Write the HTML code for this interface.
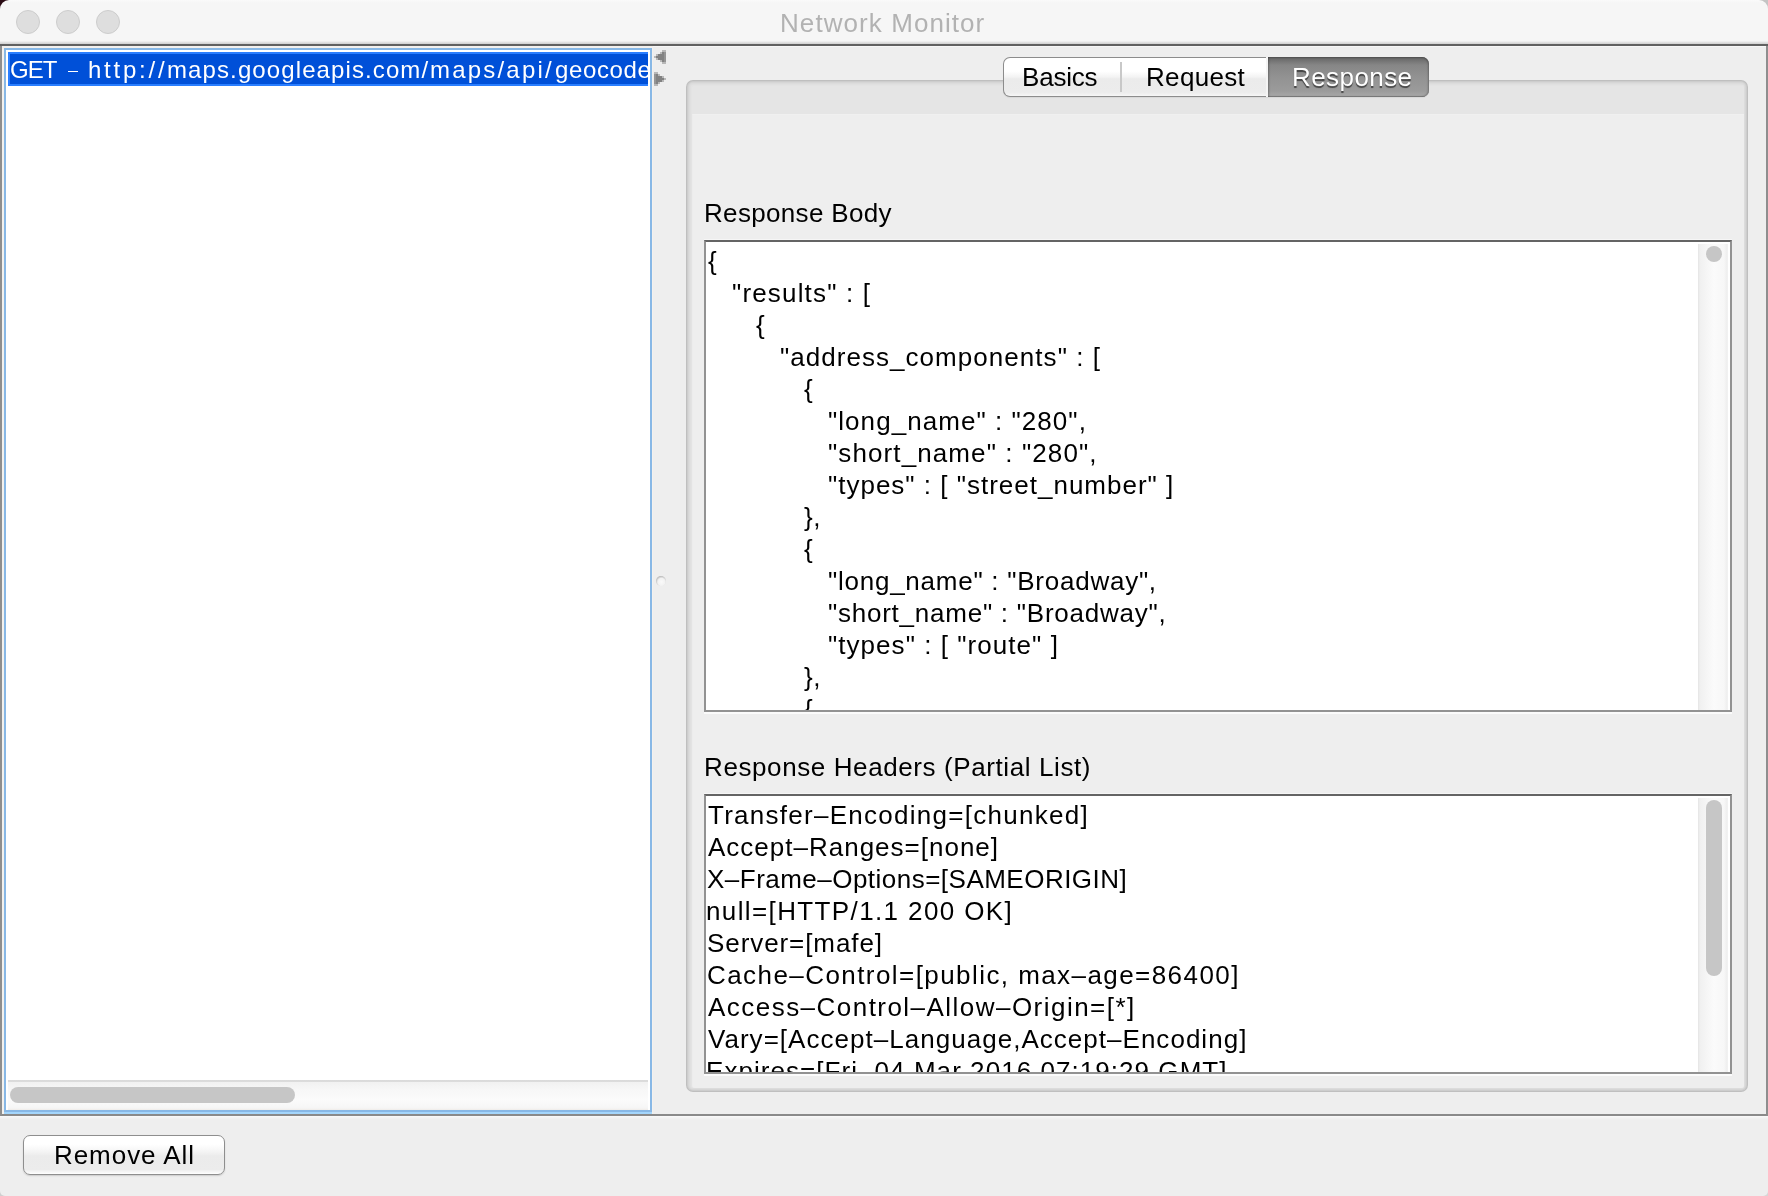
<!DOCTYPE html>
<html><head><meta charset="utf-8"><title>Network Monitor</title><style>
*{margin:0;padding:0;box-sizing:border-box}
html,body{width:1768px;height:1196px;overflow:hidden;background:#eeeeee}
body{position:relative;font-family:"Liberation Sans",sans-serif;-webkit-font-smoothing:antialiased}
.a{position:absolute}
.t{position:absolute;white-space:pre;line-height:32px;will-change:transform;font-family:"Liberation Sans",sans-serif}
</style></head><body>
<div class="a" style="left:0;top:0;width:1768px;height:1196px;background:#eeeeee;border-radius:9px 9px 0 0"></div>
<div class="a" style="left:0;top:0;width:12px;height:12px;background:#2a0c14"></div>
<div class="a" style="left:1756px;top:0;width:12px;height:12px;background:#c4c4c4"></div>
<div class="a" style="left:0;top:1188px;width:8px;height:8px;background:#cfcfcf"></div>
<div class="a" style="left:1760px;top:1188px;width:8px;height:8px;background:#d6d6d6"></div>
<div class="a" style="left:0;top:1100px;width:1768px;height:96px;background:linear-gradient(#eeeeee,#eeeeee 16px,#fafafa 16px,#f2f2f2 18px,#eeeeee 20px);border-radius:0 0 5px 5px"></div>
<div class="a" style="left:0;top:0;width:1768px;height:44px;background:linear-gradient(#fafafa,#f6f6f6 3px,#f6f6f6 41px,#e6e6e6 42px,#cfcfcf 44px);border-radius:9px 9px 0 0"></div>
<div class="a" style="left:0;top:44px;width:1768px;height:2px;background:#616161"></div>
<div class="a" style="left:16px;top:10px;width:24px;height:24px;border-radius:50%;background:#dedede;border:1px solid #cdcdcd"></div>
<div class="a" style="left:56px;top:10px;width:24px;height:24px;border-radius:50%;background:#dedede;border:1px solid #cdcdcd"></div>
<div class="a" style="left:96px;top:10px;width:24px;height:24px;border-radius:50%;background:#dedede;border:1px solid #cdcdcd"></div>
<div class="t" style="left:780px;top:7px;font-size:26px;letter-spacing:1.071px;color:#b2b2b2;">Network Monitor</div>
<div class="a" style="left:0;top:46px;width:1768px;height:1070px;background:#eeeeee;border-left:2px solid #8e8e8e;border-right:2px solid #8e8e8e;border-bottom:2px solid #8a8a8a"></div>
<div class="a" style="left:2px;top:46px;width:1764px;height:1px;background:#f7f7f7"></div>
<div class="a" style="left:2px;top:46px;width:651px;height:1068px;background:#f3f1ee"></div>
<div class="a" style="left:4px;top:48px;width:648px;height:1066px;background:#88b8e6"></div>
<div class="a" style="left:4px;top:1112px;width:648px;height:2px;background:#a4d6fc"></div>
<div class="a" style="left:6px;top:50px;width:644px;height:1060px;background:#fff"></div>
<div class="a" style="left:8px;top:52px;width:640px;height:34px;background:#0050d8;border:2px solid #2a7eff;border-right:0"></div>
<div class="a" style="left:8px;top:52px;width:640px;height:34px;overflow:hidden"><div class="t" style="left:2px;top:2px;font-size:24px;letter-spacing:-1.0px;color:#fff;">GET</div><div class="t" style="left:80px;top:2px;font-size:24px;letter-spacing:2.767px;color:#fff;">http://</div><div class="t" style="left:159px;top:2px;font-size:24px;letter-spacing:1.105px;color:#fff;">maps.googleapis.com/</div><div class="t" style="left:422.4px;top:2px;font-size:24px;letter-spacing:2.2px;color:#fff;">maps/api/</div><div class="a" style="left:60px;top:18.5px;width:10px;height:1.7px;background:#fff"></div><div class="t" style="left:546.5px;top:2px;font-size:24px;letter-spacing:0.62px;color:#fff;">geocode/json?address=280+Broadway</div></div>
<div class="a" style="left:8px;top:1080px;width:640px;height:30px;background:linear-gradient(#dadada,#dcdcdc 2px,#f1f1f1 2px,#f7f7f7 10px,#fbfbfb 20px,#f6f6f6 28px,#efece9 30px)"></div>
<div class="a" style="left:10px;top:1087px;width:285px;height:16px;border-radius:8px;background:#c6c6c6"></div>
<svg class="a" style="left:652px;top:48px" width="20" height="42" viewBox="0 0 20 42" shape-rendering="crispEdges"><rect x="10" y="2" width="4" height="2" fill="#b8b8b8"/><rect x="10" y="14" width="4" height="2" fill="#b8b8b8"/><rect x="8" y="4" width="2" height="2" fill="#b8b8b8"/><rect x="10" y="4" width="4" height="2" fill="#828282"/><rect x="8" y="12" width="2" height="2" fill="#b8b8b8"/><rect x="10" y="12" width="4" height="2" fill="#828282"/><rect x="4" y="6" width="2" height="2" fill="#b8b8b8"/><rect x="6" y="6" width="8" height="2" fill="#828282"/><rect x="4" y="10" width="2" height="2" fill="#b8b8b8"/><rect x="6" y="10" width="8" height="2" fill="#828282"/><rect x="2" y="8" width="2" height="2" fill="#b8b8b8"/><rect x="4" y="8" width="10" height="2" fill="#828282"/><rect x="12" y="4" width="2" height="10" fill="#959595"/><rect x="2" y="24" width="4" height="2" fill="#b8b8b8"/><rect x="2" y="36" width="4" height="2" fill="#b8b8b8"/><rect x="2" y="26" width="4" height="2" fill="#828282"/><rect x="6" y="26" width="2" height="2" fill="#b8b8b8"/><rect x="2" y="34" width="4" height="2" fill="#828282"/><rect x="6" y="34" width="2" height="2" fill="#b8b8b8"/><rect x="2" y="28" width="8" height="2" fill="#828282"/><rect x="10" y="28" width="2" height="2" fill="#b8b8b8"/><rect x="2" y="32" width="8" height="2" fill="#828282"/><rect x="10" y="32" width="2" height="2" fill="#b8b8b8"/><rect x="2" y="30" width="10" height="2" fill="#828282"/><rect x="12" y="30" width="2" height="2" fill="#b8b8b8"/><rect x="2" y="26" width="2" height="10" fill="#959595"/></svg>
<div class="a" style="left:656px;top:576px;width:10px;height:10px;border-radius:50%;background:radial-gradient(circle at 55% 60%,#fafafa 0,#f2f2f2 45%,#a8a8a8 80%,#d8d8d8 100%)"></div>
<div class="a" style="left:686px;top:80px;width:1062px;height:1012px"><div class="a" style="left:0px;top:0px;right:0px;bottom:0px;border-radius:7px;background:#bfbfbf"></div><div class="a" style="left:1px;top:1px;right:1px;bottom:1px;border-radius:6px;background:#cdcdcd"></div><div class="a" style="left:2px;top:2px;right:2px;bottom:2px;border-radius:5px;background:#d6d6d6"></div><div class="a" style="left:3px;top:3px;right:3px;bottom:3px;border-radius:4px;background:#dcdcdc"></div><div class="a" style="left:4px;top:4px;right:4px;bottom:4px;border-radius:3px;background:#e0e0e0"></div><div class="a" style="left:5px;top:5px;right:4px;bottom:4px;border-radius:2px;background:#e3e3e3"></div><div class="a" style="left:6px;top:6px;right:4px;bottom:4px;border-radius:2px;background:#e5e5e5"></div><div class="a" style="left:6px;top:34px;right:4px;bottom:4px;border-radius:0 0 3px 3px;background:#eeeeee;border-top:1px solid #f0f0f0;border-left:1px solid #ececec"></div></div>
<div class="a" style="left:1003px;top:57px;width:426px;height:40px;border-radius:7px;background:#8c8c8c;box-shadow:0 1px 1px rgba(0,0,0,0.06)"></div>
<div class="a" style="left:1004px;top:58px;width:262px;height:38px;border-radius:6px 0 0 6px;background:linear-gradient(#ffffff,#ffffff 35%,#f3f3f3 50%,#ebebeb 55%,#ececec 90%,#f6f6f6 100%)"></div>
<div class="a" style="left:1120px;top:62px;width:2px;height:30px;background:#c8c8c8"></div>
<div class="a" style="left:1266px;top:57px;width:2px;height:40px;background:#f4f4f4"></div>
<div class="a" style="left:1268px;top:57px;width:161px;height:40px;border-radius:0 7px 7px 0;background:linear-gradient(#5c5c5c,#6c6c6c 2px,#868686 8px,#929292 50%,#9b9b9b 85%,#a6a6a6 97%,#787878 100%);box-shadow:inset 1px 0 2px rgba(0,0,0,0.25), inset -1px 0 2px rgba(0,0,0,0.25)"></div>
<div class="t" style="left:1022px;top:61px;font-size:26px;letter-spacing:-0.2px;color:#000;">Basics</div>
<div class="t" style="left:1146px;top:61px;font-size:26px;letter-spacing:0.333px;color:#000;">Request</div>
<div class="t" style="left:1292px;top:61px;font-size:26px;letter-spacing:0.429px;color:#fff;text-shadow:0 1.5px 0.8px rgba(50,50,50,0.8)">Response</div>
<div class="t" style="left:704px;top:197px;font-size:26px;letter-spacing:0.333px;color:#000;">Response Body</div>
<div class="t" style="left:704px;top:751px;font-size:26px;letter-spacing:0.6px;color:#000;">Response Headers (Partial List)</div>
<div class="a" style="left:704px;top:239px;width:1028px;height:474px;background:#f6f6f6"></div><div class="a" style="left:704px;top:240px;width:1028px;height:472px;background:#fff;border:2px solid #929292;border-top-color:#646464"></div><div class="a" style="left:704px;top:712px;width:1028px;height:2px;background:#fbfbfb"></div><div class="a" style="left:706px;top:242px;width:1024px;height:468px;overflow:hidden"><div class="t" style="left:2px;top:3px;font-size:26px;letter-spacing:0px;color:#000;">{</div><div class="t" style="left:26px;top:35px;font-size:26px;letter-spacing:1.167px;color:#000;">&quot;results&quot; : [</div><div class="t" style="left:50px;top:67px;font-size:26px;letter-spacing:0px;color:#000;">{</div><div class="t" style="left:74px;top:99px;font-size:26px;letter-spacing:1.043px;color:#000;">&quot;address_components&quot; : [</div><div class="t" style="left:98px;top:131px;font-size:26px;letter-spacing:0px;color:#000;">{</div><div class="t" style="left:122px;top:163px;font-size:26px;letter-spacing:1.053px;color:#000;">&quot;long_name&quot; : &quot;280&quot;,</div><div class="t" style="left:122px;top:195px;font-size:26px;letter-spacing:1.1px;color:#000;">&quot;short_name&quot; : &quot;280&quot;,</div><div class="t" style="left:122px;top:227px;font-size:26px;letter-spacing:1.0px;color:#000;">&quot;types&quot; : [ &quot;street_number&quot; ]</div><div class="t" style="left:98px;top:259px;font-size:26px;letter-spacing:0.5px;color:#000;">},</div><div class="t" style="left:98px;top:291px;font-size:26px;letter-spacing:0px;color:#000;">{</div><div class="t" style="left:122px;top:323px;font-size:26px;letter-spacing:0.75px;color:#000;">&quot;long_name&quot; : &quot;Broadway&quot;,</div><div class="t" style="left:122px;top:355px;font-size:26px;letter-spacing:0.76px;color:#000;">&quot;short_name&quot; : &quot;Broadway&quot;,</div><div class="t" style="left:122px;top:387px;font-size:26px;letter-spacing:1.05px;color:#000;">&quot;types&quot; : [ &quot;route&quot; ]</div><div class="t" style="left:98px;top:419px;font-size:26px;letter-spacing:0.5px;color:#000;">},</div><div class="t" style="left:98px;top:451px;font-size:26px;letter-spacing:0px;color:#000;">{</div></div><div class="a" style="left:1698px;top:244px;width:30px;height:466px;background:linear-gradient(90deg,#e4e4e4,#f0f0f0 2px,#f5f5f5 8px,#fbfbfb 16px,#f7f7f7 26px,#eeeeee 29px,#f4f4f4 30px)"></div><div class="a" style="left:1706px;top:246px;width:16px;height:16px;border-radius:8px;background:#c6c6c6"></div>
<div class="a" style="left:704px;top:793px;width:1028px;height:282px;background:#f6f6f6"></div><div class="a" style="left:704px;top:794px;width:1028px;height:280px;background:#fff;border:2px solid #929292;border-top-color:#646464"></div><div class="a" style="left:704px;top:1074px;width:1028px;height:2px;background:#fbfbfb"></div><div class="a" style="left:706px;top:796px;width:1024px;height:276px;overflow:hidden"><div class="t" style="left:2px;top:3px;font-size:26px;letter-spacing:1.269px;color:#000;">Transfer–Encoding=[chunked]</div><div class="t" style="left:2px;top:35px;font-size:26px;letter-spacing:1.0px;color:#000;">Accept–Ranges=[none]</div><div class="t" style="left:1px;top:67px;font-size:26px;letter-spacing:0.481px;color:#000;">X–Frame–Options=[SAMEORIGIN]</div><div class="t" style="left:0px;top:99px;font-size:26px;letter-spacing:1.381px;color:#000;">null=[HTTP/1.1 200 OK]</div><div class="t" style="left:1px;top:131px;font-size:26px;letter-spacing:0.917px;color:#000;">Server=[mafe]</div><div class="t" style="left:1px;top:163px;font-size:26px;letter-spacing:1.431px;color:#000;">Cache–Control=[public, max–age=86400]</div><div class="t" style="left:2px;top:195px;font-size:26px;letter-spacing:1.467px;color:#000;">Access–Control–Allow–Origin=[*]</div><div class="t" style="left:2px;top:227px;font-size:26px;letter-spacing:1.027px;color:#000;">Vary=[Accept–Language,Accept–Encoding]</div><div class="t" style="left:0px;top:259px;font-size:26px;letter-spacing:1.053px;color:#000;">Expires=[Fri, 04 Mar 2016 07:19:29 GMT]</div></div><div class="a" style="left:1698px;top:798px;width:30px;height:274px;background:linear-gradient(90deg,#e4e4e4,#f0f0f0 2px,#f5f5f5 8px,#fbfbfb 16px,#f7f7f7 26px,#eeeeee 29px,#f4f4f4 30px)"></div><div class="a" style="left:1706px;top:800px;width:16px;height:176px;border-radius:8px;background:#c6c6c6"></div>
<div class="a" style="left:23px;top:1135px;width:202px;height:40px;border-radius:7px;background:linear-gradient(#ffffff,#ffffff 22%,#f8f8f8 35%,#efefef 48%,#ebebeb 52%,#ececec 88%,#f6f6f6 95%,#ffffff);border:1px solid #8e8e8e;box-shadow:0 1px 1.5px rgba(0,0,0,0.15)"></div>
<div class="t" style="left:54px;top:1138.5px;font-size:26px;letter-spacing:0.944px;color:#000;">Remove All</div>
</body></html>
